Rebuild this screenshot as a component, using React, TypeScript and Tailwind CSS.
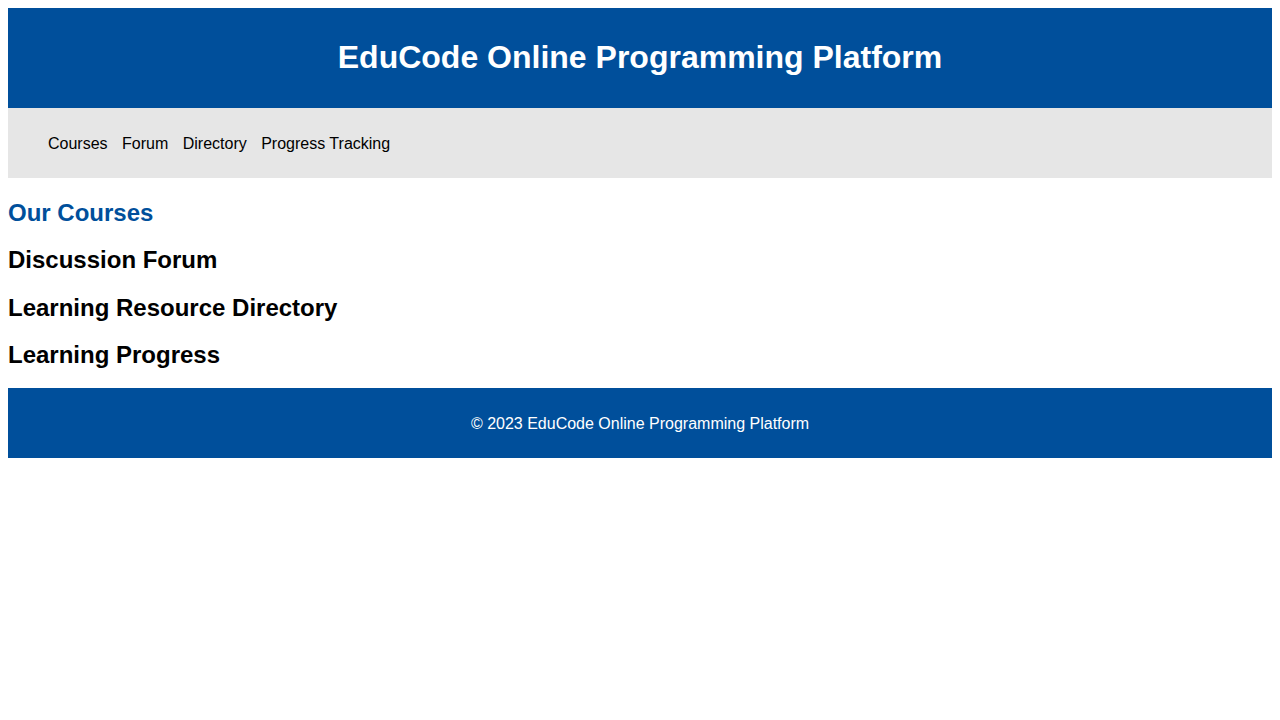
export default function App() {
  const links = ["Courses", "Forum", "Directory", "Progress Tracking"];
  const h2 = "text-2xl leading-[25.6px] pt-[2px] font-bold my-[19.92px]";
  return (
    <div className="m-2 font-['Liberation_Sans',Arial,sans-serif] text-black bg-white">
      <header className="bg-[#004f9b] text-white text-center py-[10px]">
        <h1 className="text-[32px] leading-[36.8px] font-bold my-[21.44px]">EduCode Online Programming Platform</h1>
      </header>
      <nav className="bg-[#e6e6e6] py-[10px]">
        <ul className="my-4 pl-10 pt-[2px] text-base leading-[16.4px]">
          {links.map((l, i) => (
            <span key={l}>
              <li className="inline mr-[10px]">
                <a href="#" className="text-black">{l}</a>
              </li>
              {i < links.length - 1 ? " " : ""}
            </span>
          ))}
        </ul>
      </nav>
      <main>
        <h2 className={`${h2} text-[#004f9b]`}>Our Courses</h2>
        <h2 className={h2}>Discussion Forum</h2>
        <h2 className={h2}>Learning Resource Directory</h2>
        <h2 className={h2}>Learning Progress</h2>
      </main>
      <footer className="bg-[#004f9b] text-white text-center py-[10px]">
        <p className="my-4 pt-[2px] text-base leading-[16.4px]">© 2023 EduCode Online Programming Platform</p>
      </footer>
    </div>
  );
}
